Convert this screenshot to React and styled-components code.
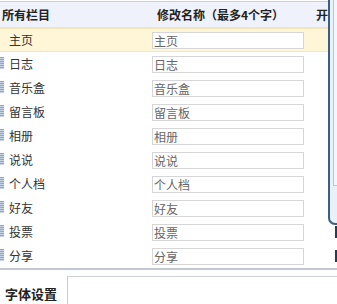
import React from "react";
import styled, { createGlobalStyle } from "styled-components";

const Global = createGlobalStyle`
  html, body { margin: 0; padding: 0; background: #fff; overflow: hidden; }
  body { font-family: "Noto Sans CJK SC", "Liberation Sans", sans-serif; font-size: 12px; color: #333; }
`;

const Page = styled.div`
  position: relative;
  width: 337px;
  height: 304px;
  overflow: hidden;
  padding-top: 1px;
  box-sizing: border-box;
`;

const Grid = styled.div`
  display: grid;
  grid-template-columns: 152px 162px 1fr;
`;

const Header = styled(Grid)`
  height: 25px;
  border-top: 1px solid #c9ced8;
  border-bottom: 1px solid #e2e4ec;
  background: #eff2fb;
  align-items: center;
  font-weight: bold;
  color: #222;
`;

const HeadCell = styled.div`
  padding-left: ${(p) => p.$pad}px;
  white-space: nowrap;
  line-height: 25px;
`;

const Row = styled(Grid)`
  height: 24px;
  box-sizing: border-box;
  align-items: center;
  background: ${(p) => (p.$active ? "#fff6d8" : "#fff")};
  border-top: 1px solid ${(p) => (p.$active ? "#f4e6bb" : "transparent")};
  border-bottom: 1px solid ${(p) => (p.$active ? "#f4e6bb" : "transparent")};
`;

const NameCell = styled.div`
  display: flex;
  align-items: center;
  height: 100%;
`;

const Handle = styled.span`
  width: 4px;
  height: 12px;
  margin-top: -3px;
  visibility: ${(p) => (p.$hidden ? "hidden" : "visible")};
  background: repeating-linear-gradient(
    to bottom,
    #8ea5c7 0px,
    #8ea5c7 1px,
    #c7d3e6 1px,
    #c7d3e6 2px
  );
`;

const Name = styled.span`
  margin-left: 5px;
  color: #333;
  line-height: 16px;
`;

const NameInput = styled.input`
  box-sizing: border-box;
  width: 152px;
  height: 17px;
  margin: 0;
  padding: 0 1px;
  border: 1px solid #d6d6d6;
  background: #fff;
  font-family: "Noto Sans CJK SC", "Liberation Sans", sans-serif;
  font-size: 12px;
  color: #666;
  outline: none;
`;

const ToggleCell = styled.div`
  display: flex;
  align-items: center;
  height: 100%;
  padding-left: 21px;
`;

const Toggle = styled.span`
  width: 12px;
  height: 12px;
  background: #1f3e5e;
`;

const Divider = styled.div`
  margin-top: 0;
  border-top: 2px solid #c3c8ce;
`;

const TabBar = styled.div`
  display: flex;
  margin-top: 6px;
  height: 40px;
`;

const Tab = styled.div`
  width: 62px;
  padding-left: 5px;
  border-right: 1px solid #c8ccd2;
  font-weight: bold;
  font-size: 13px;
  color: #222;
  line-height: 20px;
  padding-top: 8px;
`;

const TabRest = styled.div`
  flex: 1;
  border-top: 1px solid #d0d4da;
`;

const Panel = styled.div`
  position: absolute;
  left: 328px;
  top: 0;
  width: 20px;
  height: 223px;
  border-left: 2px solid #3a5f82;
  border-bottom: 2px solid #3a5f82;
  border-bottom-left-radius: 7px;
  background: #e9f1f9;
`;

const PanelInner = styled.div`
  margin-left: 3px;
  height: 185px;
  border-left: 1px solid #b6c7d8;
  border-bottom: 1px solid #b6c7d8;
  background: #f4f8fc;
`;

const items = ["主页", "日志", "音乐盒", "留言板", "相册", "说说", "个人档", "好友", "投票", "分享"];

export default function App() {
  return (
    <Page>
      <Global />
      <Header>
        <HeadCell $pad={2}>所有栏目</HeadCell>
        <HeadCell $pad={5}>修改名称（最多4个字）</HeadCell>
        <HeadCell $pad={2}>开</HeadCell>
      </Header>
      {items.map((name, i) => (
        <Row key={name} $active={i === 0}>
          <NameCell>
            <Handle $hidden={i === 0} />
            <Name>{name}</Name>
          </NameCell>
          <div>
            <NameInput defaultValue={name} />
          </div>
          <ToggleCell>
            <Toggle />
          </ToggleCell>
        </Row>
      ))}
      <Divider />
      <TabBar>
        <Tab>字体设置</Tab>
        <TabRest />
      </TabBar>
      <Panel>
        <PanelInner />
      </Panel>
    </Page>
  );
}
